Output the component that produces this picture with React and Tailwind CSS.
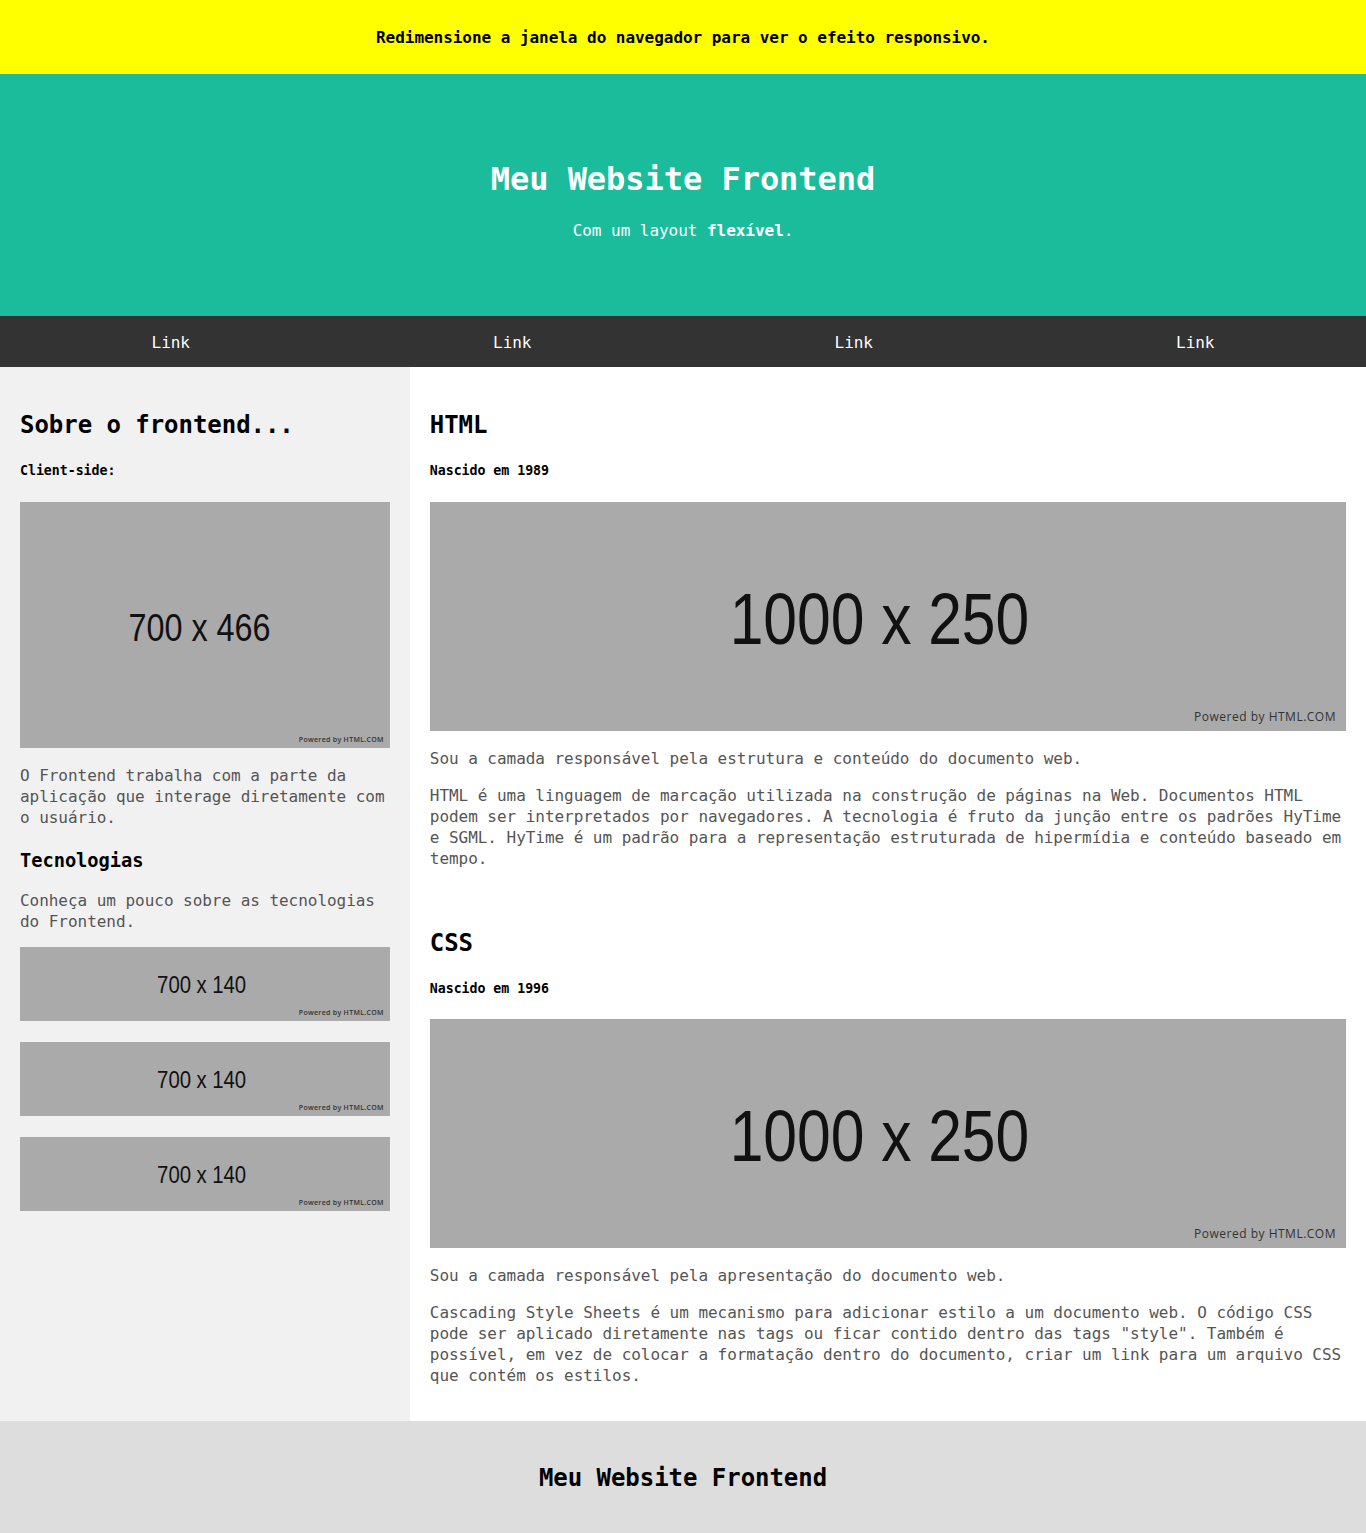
import React from 'react';

const Placeholder = ({ label, height, fontSize, small }) => {
  return (
    <div className={`relative bg-[#aaa] w-full flex items-center justify-center ${height}`}>
      <span
        className={`font-['Liberation_Sans',Arial,sans-serif] text-[#111] leading-none scale-x-[0.83] ${fontSize}`}
      >
        {label}
      </span>
      {small ? (
        <span className="absolute right-[6px] bottom-[5px] font-['Open_Sans',sans-serif] text-[7px] leading-[7px] tracking-[0.3px] text-[#333] font-semibold">
          Powered by HTML.COM
        </span>
      ) : (
        <span className="absolute right-[10px] bottom-[7px] font-['Open_Sans',sans-serif] text-[12px] leading-[14px] tracking-[0.5px] text-[#333]">
          Powered by HTML.COM
        </span>
      )}
    </div>
  );
};

const App = () => {
  const links = ['Link', 'Link', 'Link', 'Link'];

  return (
    <div className="font-['DejaVu_Sans_Mono',monospace] tracking-[-0.04px] text-black">
      {/* Aviso */}
      <div className="h-[74px] bg-[#ffff00] flex items-center justify-center pt-[2px]">
        <p className="text-[16px] font-bold">Redimensione a janela do navegador para ver o efeito responsivo.</p>
      </div>

      {/* Header */}
      <div className="h-[242px] bg-[#1abc9c] pt-[85px] text-center text-white">
        <h1 className="text-[32px] leading-[40px] font-bold">Meu Website Frontend</h1>
        <p className="mt-[20px] text-[16px] leading-[24px]">
          Com um layout <b>flexível</b>.
        </p>
      </div>

      {/* Navbar */}
      <div className="h-[51px] bg-[#333] grid grid-cols-4 pt-[2px]">
        {links.map((l, i) => (
          <a key={i} href="#" className="flex items-center justify-center text-white text-[16px]">
            {l}
          </a>
        ))}
      </div>

      {/* Conteudo */}
      <div className="flex">
        <div className="w-[30%] bg-[#f1f1f1] p-5">
          <h2 className="mt-[22px] text-[24px] leading-[32px] font-bold">Sobre o frontend...</h2>
          <h5 className="mt-[22px] text-[13.28px] leading-[16px] font-bold">Client-side:</h5>
          <div className="mt-[23px]">
            <Placeholder label="700 x 466" height="h-[246px]" fontSize="text-[39px] translate-y-[2px] -translate-x-[5px]" small />
          </div>
          <p className="mt-[17px] text-[16px] leading-[21px] text-[#555]">
            O Frontend trabalha com a parte da aplicação que interage diretamente com o usuário.
          </p>
          <h3 className="mt-[21px] text-[18.72px] leading-[24px] font-bold">Tecnologias</h3>
          <p className="mt-[17px] text-[16px] leading-[21px] text-[#555]">
            Conheça um pouco sobre as tecnologias do Frontend.
          </p>
          <div className="mt-[15px] flex flex-col gap-[21px]">
            <Placeholder label="700 x 140" height="h-[74px]" fontSize="text-[24.5px] translate-y-[1px] -translate-x-[3px]" small />
            <Placeholder label="700 x 140" height="h-[74px]" fontSize="text-[24.5px] translate-y-[1px] -translate-x-[3px]" small />
            <Placeholder label="700 x 140" height="h-[74px]" fontSize="text-[24.5px] translate-y-[1px] -translate-x-[3px]" small />
          </div>
        </div>

        <div className="w-[70%] bg-white px-5 pt-5 pb-[35px]">
          <h2 className="mt-[22px] text-[24px] leading-[32px] font-bold">HTML</h2>
          <h5 className="mt-[22px] text-[13.28px] leading-[16px] font-bold">Nascido em 1989</h5>
          <div className="mt-[23px]">
            <Placeholder label="1000 x 250" height="h-[229px]" fontSize="text-[73px] translate-y-[2px] -translate-x-[8px]" />
          </div>
          <p className="mt-[17px] text-[16px] leading-[21px] text-[#555]">
            Sou a camada responsável pela estrutura e conteúdo do documento web.
          </p>
          <p className="mt-[16px] text-[16px] leading-[21px] text-[#555]">
            HTML é uma linguagem de marcação utilizada na construção de páginas na Web. Documentos HTML podem ser
            interpretados por navegadores. A tecnologia é fruto da junção entre os padrões HyTime e SGML. HyTime é um
            padrão para a representação estruturada de hipermídia e conteúdo baseado em tempo.
          </p>

          <h2 className="mt-[58px] text-[24px] leading-[32px] font-bold">CSS</h2>
          <h5 className="mt-[22px] text-[13.28px] leading-[16px] font-bold">Nascido em 1996</h5>
          <div className="mt-[22px]">
            <Placeholder label="1000 x 250" height="h-[229px]" fontSize="text-[73px] translate-y-[2px] -translate-x-[8px]" />
          </div>
          <p className="mt-[17px] text-[16px] leading-[21px] text-[#555]">
            Sou a camada responsável pela apresentação do documento web.
          </p>
          <p className="mt-[16px] text-[16px] leading-[21px] text-[#555]">
            Cascading Style Sheets é um mecanismo para adicionar estilo a um documento web. O código CSS pode ser
            aplicado diretamente nas tags ou ficar contido dentro das tags "style". Também é possível, em vez de colocar
            a formatação dentro do documento, criar um link para um arquivo CSS que contém os estilos.
          </p>
        </div>
      </div>

      {/* Footer */}
      <div className="h-[112px] bg-[#ddd] flex items-center justify-center pt-[2px]">
        <h2 className="text-[24px] leading-[32px] font-bold">Meu Website Frontend</h2>
      </div>
    </div>
  );
};

export default App;
